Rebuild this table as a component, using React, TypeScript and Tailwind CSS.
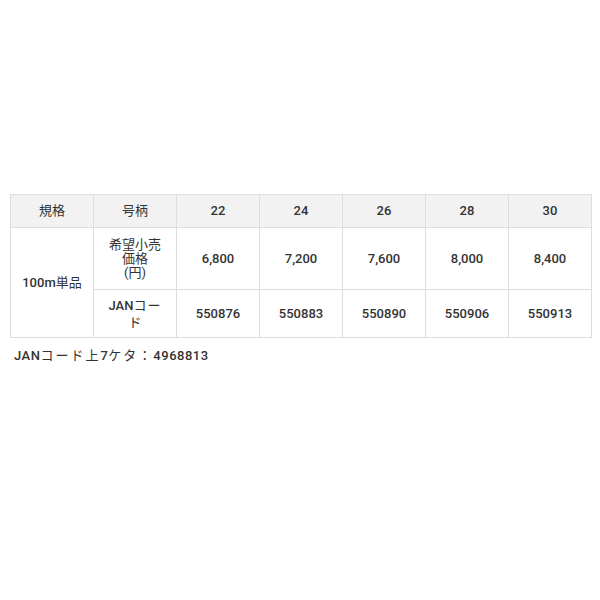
const sizes = ["22", "24", "26", "28", "30"];
const prices = ["6,800", "7,200", "7,600", "8,000", "8,400"];
const jans = ["550876", "550883", "550890", "550906", "550913"];

const cell = "border border-[#dddddd] text-center align-middle px-2";

export default function App() {
  return (
    <div
      className="w-[600px] h-[600px] bg-white pt-[194px] pl-[10px] text-[#333333] text-[13px]"
      style={{ fontFamily: 'Roboto, "Noto Sans CJK JP", sans-serif' }}
    >
      <table className="border-collapse w-[581px] table-fixed">
        <colgroup>
          {Array.from({ length: 7 }).map((_, i) => (
            <col key={i} className="w-[83px]" />
          ))}
        </colgroup>
        <tbody>
          <tr className="h-[33px] bg-[#f2f2f2]">
            <td className={`${cell} font-normal`}>規格</td>
            <td className={`${cell} font-normal`}>号柄</td>
            {sizes.map((s) => (
              <td key={s} className={`${cell} font-medium`}>
                {s}
              </td>
            ))}
          </tr>
          <tr className="h-[62px]">
            <td rowSpan={2} className={`${cell} font-medium`}>
              100m<span className="font-normal">単品</span>
            </td>
            <td className={`${cell} font-normal leading-[14px]`}>
              希望小売
              <br />
              価格
              <br />
              (円)
            </td>
            {prices.map((p) => (
              <td key={p} className={`${cell} font-medium`}>
                {p}
              </td>
            ))}
          </tr>
          <tr className="h-[48px]">
            <td className={`${cell} font-medium leading-[17px]`}>
              JAN<span className="font-normal tracking-[1px]">コー</span>
              <br />
              <span className="font-normal">ド</span>
            </td>
            {jans.map((j) => (
              <td key={j} className={`${cell} font-medium`}>
                {j}
              </td>
            ))}
          </tr>
        </tbody>
      </table>
      <p className="mt-[8px] pl-[4px] font-medium tracking-[0.5px]">
        JAN<span className="font-normal tracking-[2px]">コード上</span>7
        <span className="font-normal tracking-[2px]">ケタ：</span>4968813
      </p>
    </div>
  );
}
